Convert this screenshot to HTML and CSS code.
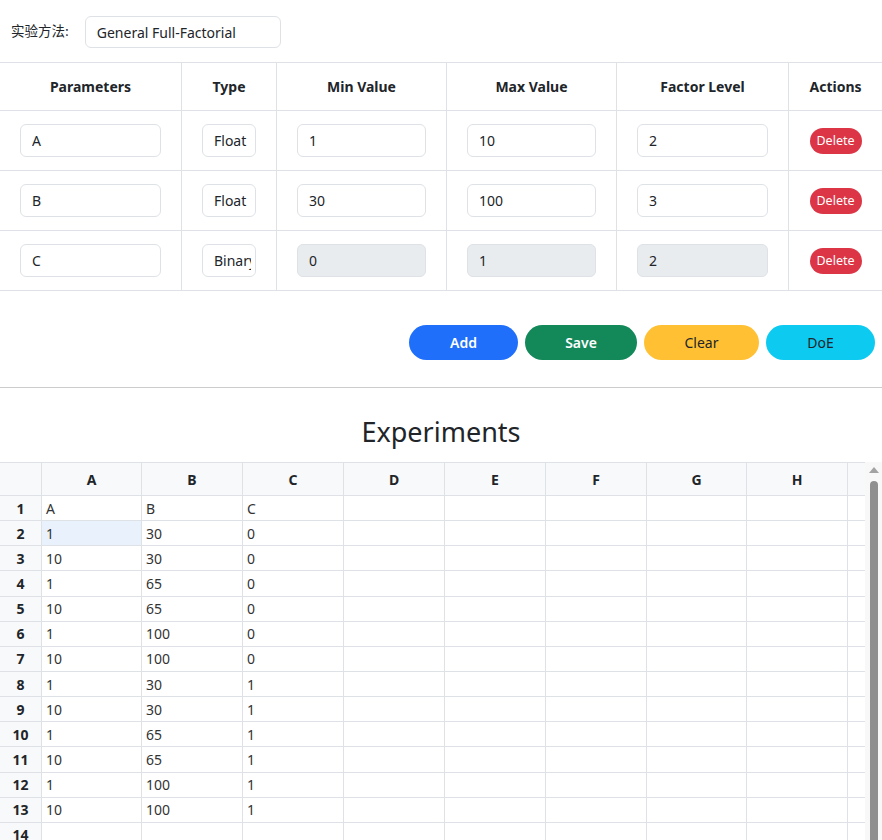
FILE: index.html
```html
<!DOCTYPE html>
<html lang="zh">
<head>
<meta charset="utf-8">
<title>DoE</title>
<link rel="stylesheet" href="styles.css">
</head>
<body>
<div class="page">
  <div class="method">
    <label class="method-label">实验方法:</label>
    <input class="method-input" type="text" value="General Full-Factorial">
  </div>

  <div class="ptable">
    <div class="ph">Parameters</div>
    <div class="ph">Type</div>
    <div class="ph">Min Value</div>
    <div class="ph">Max Value</div>
    <div class="ph">Factor Level</div>
    <div class="ph">Actions</div>

    <div class="pc"><input class="fld" value="A"></div>
    <div class="pc"><input class="fld type" value="Float"></div>
    <div class="pc"><input class="fld" value="1"></div>
    <div class="pc"><input class="fld" value="10"></div>
    <div class="pc"><input class="fld" value="2"></div>
    <div class="pc"><button class="del">Delete</button></div>

    <div class="pc"><input class="fld" value="B"></div>
    <div class="pc"><input class="fld type" value="Float"></div>
    <div class="pc"><input class="fld" value="30"></div>
    <div class="pc"><input class="fld" value="100"></div>
    <div class="pc"><input class="fld" value="3"></div>
    <div class="pc"><button class="del">Delete</button></div>

    <div class="pc"><input class="fld" value="C"></div>
    <div class="pc"><input class="fld type" value="Binary"></div>
    <div class="pc"><input class="fld" value="0" disabled></div>
    <div class="pc"><input class="fld" value="1" disabled></div>
    <div class="pc"><input class="fld" value="2" disabled></div>
    <div class="pc"><button class="del">Delete</button></div>
  </div>

  <div class="actions">
    <button class="btn btn-add">Add</button>
    <button class="btn btn-save">Save</button>
    <button class="btn btn-clear">Clear</button>
    <button class="btn btn-doe">DoE</button>
  </div>

  <hr class="sep">

  <h2 class="title">Experiments</h2>

  <div class="sheet-wrap">
    <div class="sheet" id="sheet">
      <div class="sh corner"></div>
      <div class="sh">A</div><div class="sh">B</div><div class="sh">C</div><div class="sh">D</div>
      <div class="sh">E</div><div class="sh">F</div><div class="sh">G</div><div class="sh">H</div><div class="sh"></div>

      <div class="rn">1</div><div class="sc">A</div><div class="sc">B</div><div class="sc">C</div><div class="sc"></div><div class="sc"></div><div class="sc"></div><div class="sc"></div><div class="sc"></div><div class="sc"></div>
      <div class="rn">2</div><div class="sc sel">1</div><div class="sc">30</div><div class="sc">0</div><div class="sc"></div><div class="sc"></div><div class="sc"></div><div class="sc"></div><div class="sc"></div><div class="sc"></div>
      <div class="rn">3</div><div class="sc">10</div><div class="sc">30</div><div class="sc">0</div><div class="sc"></div><div class="sc"></div><div class="sc"></div><div class="sc"></div><div class="sc"></div><div class="sc"></div>
      <div class="rn">4</div><div class="sc">1</div><div class="sc">65</div><div class="sc">0</div><div class="sc"></div><div class="sc"></div><div class="sc"></div><div class="sc"></div><div class="sc"></div><div class="sc"></div>
      <div class="rn">5</div><div class="sc">10</div><div class="sc">65</div><div class="sc">0</div><div class="sc"></div><div class="sc"></div><div class="sc"></div><div class="sc"></div><div class="sc"></div><div class="sc"></div>
      <div class="rn">6</div><div class="sc">1</div><div class="sc">100</div><div class="sc">0</div><div class="sc"></div><div class="sc"></div><div class="sc"></div><div class="sc"></div><div class="sc"></div><div class="sc"></div>
      <div class="rn">7</div><div class="sc">10</div><div class="sc">100</div><div class="sc">0</div><div class="sc"></div><div class="sc"></div><div class="sc"></div><div class="sc"></div><div class="sc"></div><div class="sc"></div>
      <div class="rn">8</div><div class="sc">1</div><div class="sc">30</div><div class="sc">1</div><div class="sc"></div><div class="sc"></div><div class="sc"></div><div class="sc"></div><div class="sc"></div><div class="sc"></div>
      <div class="rn">9</div><div class="sc">10</div><div class="sc">30</div><div class="sc">1</div><div class="sc"></div><div class="sc"></div><div class="sc"></div><div class="sc"></div><div class="sc"></div><div class="sc"></div>
      <div class="rn">10</div><div class="sc">1</div><div class="sc">65</div><div class="sc">1</div><div class="sc"></div><div class="sc"></div><div class="sc"></div><div class="sc"></div><div class="sc"></div><div class="sc"></div>
      <div class="rn">11</div><div class="sc">10</div><div class="sc">65</div><div class="sc">1</div><div class="sc"></div><div class="sc"></div><div class="sc"></div><div class="sc"></div><div class="sc"></div><div class="sc"></div>
      <div class="rn">12</div><div class="sc">1</div><div class="sc">100</div><div class="sc">1</div><div class="sc"></div><div class="sc"></div><div class="sc"></div><div class="sc"></div><div class="sc"></div><div class="sc"></div>
      <div class="rn">13</div><div class="sc">10</div><div class="sc">100</div><div class="sc">1</div><div class="sc"></div><div class="sc"></div><div class="sc"></div><div class="sc"></div><div class="sc"></div><div class="sc"></div>
      <div class="rn">14</div><div class="sc"></div><div class="sc"></div><div class="sc"></div><div class="sc"></div><div class="sc"></div><div class="sc"></div><div class="sc"></div><div class="sc"></div><div class="sc"></div>
    </div>
    <div class="vscroll">
      <div class="arrow"></div>
      <div class="thumb"></div>
    </div>
  </div>
</div>
</body>
</html>
```

FILE: styles.css
```css
* { box-sizing: border-box; }
html, body { margin: 0; padding: 0; overflow: hidden; background: #fff; }
body {
  font-family: "Noto Sans", "Noto Sans CJK SC", sans-serif;
  font-size: 14px;
  color: #212529;
}
.page { width: 882px; }

.method {
  display: flex;
  align-items: center;
  padding: 16px 0 0 11px;
  gap: 16px;
  height: 48px;
}
.method-label {
  font-family: "Noto Sans CJK SC", sans-serif;
  font-size: 13.5px;
  color: #212529;
  margin-top: -4px;
}
.method-input {
  width: 196px;
  height: 32px;
  border: 1px solid #dee2e6;
  border-radius: 6px;
  padding: 0 11px;
  font: inherit;
  font-size: 14px;
  color: #212529;
}

.ptable {
  margin-top: 14px;
  display: grid;
  grid-template-columns: 182px 95px 170px 170px 172px 93px;
  grid-template-rows: 48px 60px 60px 60px;
  border-top: 1px solid #dee2e6;
}
.ph, .pc {
  border-right: 1px solid #dee2e6;
  border-bottom: 1px solid #dee2e6;
  display: flex;
  align-items: center;
  justify-content: center;
}
.ph:nth-child(6n), .pc:nth-child(6n) { border-right: none; }
.ph { font-weight: 700; font-size: 14px; color: #212529; padding-bottom: 1px; }
.pc { padding: 0 20px; }
.fld {
  width: 100%;
  height: 33px;
  border: 1px solid #dee2e6;
  border-radius: 6px;
  padding: 0 12px 0 11px;
  font: inherit;
  font-size: 14px;
  color: #212529;
  background: #fff;
}
.fld.type { padding: 0 4px 0 11px; }
.fld:disabled { background: #e9ecef; color: #212529; }
.del {
  width: 52px;
  height: 26px;
  border: none;
  border-radius: 13px;
  background: #dc3545;
  color: #fff;
  font: inherit;
  font-size: 12.5px;
  padding: 0;
}

.actions {
  display: flex;
  justify-content: flex-end;
  gap: 7px;
  padding: 34px 7px 0 0;
}
.btn {
  height: 35px;
  border: none;
  border-radius: 18px;
  font: inherit;
  font-size: 14px;
  padding: 0;
}
.btn-add { width: 109px; background: #1f6ffb; color: #fff; font-weight: 600; }
.btn-save { width: 112px; background: #138859; color: #fff; font-weight: 600; }
.btn-clear { width: 115px; background: #ffc133; color: #212529; }
.btn-doe { width: 109px; background: #0dcaf0; color: #212529; }

.sep {
  margin: 27px 0 0 0;
  border: none;
  border-top: 1px solid #cccccc;
  height: 0;
}
.title {
  margin: 0;
  height: 74px;
  display: flex;
  align-items: center;
  justify-content: center;
  font-weight: 400;
  font-size: 27px;
  color: #212529;
  padding-top: 12px;
}

.sheet-wrap { display: flex; }
.sheet {
  width: 865px;
  display: grid;
  grid-template-columns: 42px 100px 101px 101px 101px 101px 101px 100px 101px 17px;
  grid-template-rows: 33px;
  grid-auto-rows: 25.15px;
  border-top: 1px solid #dee2e6;
}
.sh, .rn, .sc {
  border-right: 1px solid #dee2e6;
  border-bottom: 1px solid #dee2e6;
  display: flex;
  align-items: center;
  font-size: 14px;
  overflow: hidden;
}
.sh {
  background: #f8f9fa;
  justify-content: center;
  font-weight: 700;
  color: #212529;
}
.rn {
  background: #f8f9fa;
  justify-content: center;
  font-weight: 700;
  color: #212529;
}
.sc { padding-left: 4px; color: #333; }
.sc.sel { background: #e8f1fc; }
.sc:nth-child(10n), .sh:nth-child(10n) { border-right: none; }

.vscroll {
  width: 17px;
  background: #f8f8f8;
  display: flex;
  flex-direction: column;
  align-items: center;
  padding-top: 5px;
}
.arrow {
  width: 0; height: 0;
  border-left: 5px solid transparent;
  border-right: 5px solid transparent;
  border-bottom: 6px solid #a3a3a3;
}
.thumb {
  margin-top: 8px;
  width: 8px;
  height: 400px;
  border-radius: 4px;
  background: #8f8f8f;
}
```
